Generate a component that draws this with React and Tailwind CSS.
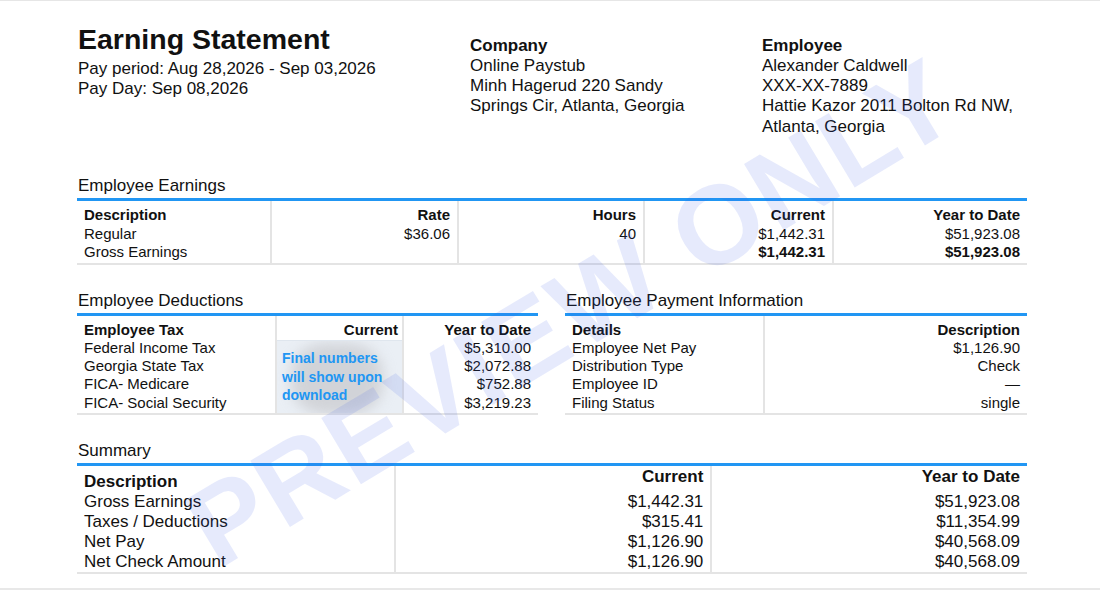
const earnings = [
  { head: 'Description', rows: ['Regular', 'Gross Earnings'], w: 'w-[193px]', left: true },
  { head: 'Rate', rows: ['$36.06', '\u00a0'], w: 'w-[187px]' },
  { head: 'Hours', rows: ['40', '\u00a0'], w: 'w-[186px]' },
  { head: 'Current', rows: ['$1,442.31', '$1,442.31'], w: 'w-[189px]', boldLast: true },
  { head: 'Year to Date', rows: ['$51,923.08', '$51,923.08'], w: 'flex-1', boldLast: true },
];

const taxes = ['Federal Income Tax', 'Georgia State Tax', 'FICA- Medicare', 'FICA- Social Security'];
const taxYtd = ['$5,310.00', '$2,072.88', '$752.88', '$3,219.23'];

const payInfo = [
  ['Employee Net Pay', '$1,126.90'],
  ['Distribution Type', 'Check'],
  ['Employee ID', '\u2014'],
  ['Filing Status', 'single'],
];

const summary = [
  ['Gross Earnings', '$1,442.31', '$51,923.08'],
  ['Taxes / Deductions', '$315.41', '$11,354.99'],
  ['Net Pay', '$1,126.90', '$40,568.09'],
  ['Net Check Amount', '$1,126.90', '$40,568.09'],
];

function SectionTitle({ children }) {
  return (
    <div className="border-b-[3px] border-[#2196f3] pb-[2px] pl-px text-[17px] leading-5">
      {children}
    </div>
  );
}

function Col({ head, rows, w, left, boldLast, first }) {
  return (
    <div
      className={`${w} flex flex-col px-[7px] pt-[5px] pb-px ${left ? 'text-left' : 'text-right'} ${
        first ? '' : 'border-l-2 border-[#e4e4e4]'
      }`}
    >
      <div className="font-bold">{head}</div>
      {rows.map((r, i) => (
        <div key={i} className={boldLast && i === rows.length - 1 ? 'font-bold' : ''}>
          {r}
        </div>
      ))}
    </div>
  );
}

export default function App() {
  return (
    <div className="relative h-[590px] w-[1100px] overflow-hidden border-t border-[#e6e6e6] bg-white font-['Liberation_Sans',Arial,sans-serif] text-[#111]">
      <div className="ml-[77px] w-[950px]">
        {/* Header */}
        <div className="flex text-[17px] leading-5">
          <div className="w-[393px] pt-[22px]">
            <h1 className="pl-px text-[28.5px] font-bold leading-8">Earning Statement</h1>
            <div className="mt-[4px] pl-px">Pay period: Aug 28,2026 - Sep 03,2026</div>
            <div className="pl-px">Pay Day: Sep 08,2026</div>
          </div>
          <div className="w-[292px] pt-[35px]">
            <div className="font-bold">Company</div>
            <div>Online Paystub</div>
            <div>Minh Hagerud 220 Sandy</div>
            <div>Springs Cir, Atlanta, Georgia</div>
          </div>
          <div className="flex-1 pt-[35px]">
            <div className="font-bold">Employee</div>
            <div>Alexander Caldwell</div>
            <div>XXX-XX-7889</div>
            <div>Hattie Kazor 2011 Bolton Rd NW,</div>
            <div className="mt-px">Atlanta, Georgia</div>
          </div>
        </div>

        {/* Employee Earnings */}
        <div className="mt-[39px]">
          <SectionTitle>Employee Earnings</SectionTitle>
          <div className="flex border-b-2 border-[#e4e4e4] text-[15px] leading-[18.5px]">
            {earnings.map((c, i) => (
              <Col key={c.head} {...c} first={i === 0} />
            ))}
          </div>
        </div>

        {/* Deductions + Payment info */}
        <div className="mt-[26px] flex gap-[27px]">
          <div className="w-[461px]">
            <SectionTitle>Employee Deductions</SectionTitle>
            <div className="flex border-b-2 border-[#e4e4e4] text-[15px] leading-[18.3px]">
              <Col head="Employee Tax" rows={taxes} w="w-[198px]" left first />
              <div className="flex w-[127px] flex-col border-l-2 border-[#e4e4e4] pt-[5px]">
                <div className="px-[4px] text-right font-bold">Current</div>
                <div className="relative mt-[1px] flex flex-1 items-center overflow-hidden border-t border-[#dfe6ee] bg-[#eaeff5] pl-[5px]">
                  <div className="absolute left-[14px] top-[2px] h-[72px] w-[92px] rounded-[40%] bg-[#c2c2c5] opacity-60 blur-[7px]" />
                  <div className="relative text-[14px] font-bold leading-[18.5px] text-[#2196f3]">
                    Final numbers
                    <br />
                    will show upon
                    <br />
                    download
                  </div>
                </div>
              </div>
              <Col head="Year to Date" rows={taxYtd} w="flex-1" />
            </div>
          </div>
          <div className="flex-1">
            <SectionTitle>Employee Payment Information</SectionTitle>
            <div className="flex border-b-2 border-[#e4e4e4] text-[15px] leading-[18.3px]">
              <Col head="Details" rows={payInfo.map((p) => p[0])} w="w-[198px]" left first />
              <Col head="Description" rows={payInfo.map((p) => p[1])} w="flex-1" />
            </div>
          </div>
        </div>

        {/* Summary */}
        <div className="mt-[26px]">
          <SectionTitle>Summary</SectionTitle>
          <div className="grid grid-cols-3 border-b-2 border-[#e4e4e4] text-[17px] leading-5">
            <div className="flex flex-col px-[7px]">
              <div className="flex h-[26px] items-end font-bold">Description</div>
              {summary.map((r) => (
                <div key={r[0]}>{r[0]}</div>
              ))}
            </div>
            <div className="flex flex-col border-l-2 border-[#e4e4e4] px-[7px] text-right">
              <div className="h-[26px] pt-px font-bold">Current</div>
              {summary.map((r) => (
                <div key={r[0]}>{r[1]}</div>
              ))}
            </div>
            <div className="flex flex-col border-l-2 border-[#e4e4e4] px-[7px] text-right">
              <div className="h-[26px] pt-px font-bold">Year to Date</div>
              {summary.map((r) => (
                <div key={r[0]}>{r[2]}</div>
              ))}
            </div>
          </div>
        </div>
      </div>

      <div className="absolute inset-x-0 top-[587px] h-[2px] bg-[#e8e8e8]" />

      {/* Watermark */}
      <div className="pointer-events-none absolute left-[572px] top-[312px] -translate-x-1/2 -translate-y-1/2 -rotate-[31deg] whitespace-nowrap text-[112px] font-bold leading-none tracking-[2px] text-[rgba(60,90,230,0.13)]">
        PREVIEW ONLY
      </div>
    </div>
  );
}
